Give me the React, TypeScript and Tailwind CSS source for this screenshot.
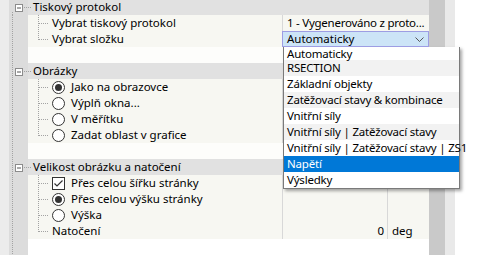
import type { ReactNode } from 'react'

type Control = 'radio' | 'radioOn' | 'check'

type Row =
  | { kind: 'header'; label: string; first?: boolean }
  | { kind: 'child'; label: string; control?: Control; last?: boolean; value?: ReactNode; unit?: boolean; unitText?: string }
  | { kind: 'blank' }

const rows: Row[] = [
  { kind: 'header', label: 'Tiskový protokol', first: true },
  { kind: 'child', label: 'Vybrat tiskový protokol', value: '1 - Vygenerováno z proto...' },
  { kind: 'child', label: 'Vybrat složku', last: true, value: 'select' },
  { kind: 'blank' },
  { kind: 'header', label: 'Obrázky' },
  { kind: 'child', label: 'Jako na obrazovce', control: 'radioOn' },
  { kind: 'child', label: 'Výplň okna...', control: 'radio' },
  { kind: 'child', label: 'V měřítku', control: 'radio' },
  { kind: 'child', label: 'Zadat oblast v grafice', control: 'radio', last: true },
  { kind: 'blank' },
  { kind: 'header', label: 'Velikost obrázku a natočení' },
  { kind: 'child', label: 'Přes celou šířku stránky', control: 'check', unit: true },
  { kind: 'child', label: 'Přes celou výšku stránky', control: 'radioOn', unit: true },
  { kind: 'child', label: 'Výška', control: 'radio', unit: true },
  { kind: 'child', label: 'Natočení', last: true, unit: true, value: '0', unitText: 'deg' },
]

const options = [
  'Automaticky',
  'RSECTION',
  'Základní objekty',
  'Zatěžovací stavy & kombinace',
  'Vnitřní síly',
  'Vnitřní síly | Zatěžovací stavy',
  'Vnitřní síly | Zatěžovací stavy | ZS1',
  'Napětí',
  'Výsledky',
]

const DOT = '#a3a3a3'

function Gutter({ header, first }: { header?: boolean; first?: boolean }) {
  return (
    <div className="flex h-4 shrink-0">
      <div className="w-[9px] bg-[#ececec]" />
      <svg width="19" height="16" className="block bg-[#dcdcdc]">
        <line x1="3.5" y1={first ? 13 : 0} x2="3.5" y2="16" stroke={DOT} strokeDasharray="1 1" />
        {header && (
          <>
            <rect x="6.5" y="5.5" width="7" height="7" fill="#ffffff" stroke="#8c8c8c" />
            <line x1="8" y1="9" x2="12" y2="9" stroke="#555555" />
            <line x1="15" y1="8.5" x2="19" y2="8.5" stroke={DOT} strokeDasharray="1 1" />
          </>
        )}
      </svg>
    </div>
  )
}

function ControlIcon({ type }: { type: Control }) {
  if (type === 'check') {
    return (
      <svg width="13" height="13" className="block shrink-0">
        <rect x="0.5" y="0.5" width="12" height="12" fill="#ffffff" stroke="#333333" />
        <path d="M2.5 6.5 L5 9 L10.5 3.5" fill="none" stroke="#333333" strokeWidth="1.2" />
      </svg>
    )
  }
  return (
    <svg width="13" height="13" className="block shrink-0">
      <circle cx="6.5" cy="6.5" r="6" fill="#ffffff" stroke="#333333" />
      {type === 'radioOn' && <circle cx="6.5" cy="6.5" r="3.5" fill="#333333" />}
    </svg>
  )
}

function SelectCell() {
  return (
    <div className="relative z-20 flex h-4 w-[147px] items-center justify-between border border-[#9d9de3] bg-[#cce4f7] pl-1 pr-[4px]">
      <span>Automaticky</span>
      <svg width="9" height="5" className="block">
        <path d="M0.5 0.5 L4.5 4.5 L8.5 0.5" fill="none" stroke="#555555" />
      </svg>
    </div>
  )
}

function ValueCell({ row }: { row: Extract<Row, { kind: 'child' }> }) {
  if (row.value === 'select') return <SelectCell />
  if (row.unit) {
    return (
      <div className="flex h-4 w-[147px] border-l border-[#d8d8d8]">
        <div className="flex w-[104px] items-center justify-end pr-[3px]">{row.value}</div>
        <div className="flex flex-1 items-center border-l border-[#d8d8d8] pl-1">{row.unitText}</div>
      </div>
    )
  }
  return (
    <div className="flex h-4 w-[147px] items-center overflow-hidden whitespace-nowrap border-l border-[#d8d8d8] pl-1 tracking-[-0.25px]">
      {row.value}
    </div>
  )
}

function TreeRow({ row }: { row: Row }) {
  if (row.kind === 'blank') {
    return (
      <div className="flex h-4 bg-[#fdfdfb]">
        <Gutter />
      </div>
    )
  }
  if (row.kind === 'header') {
    return (
      <div className="flex h-4 items-center bg-[#e1e1e1]">
        <Gutter header first={row.first} />
        <svg width="5" height="16" className="block shrink-0">
          <line x1="0" y1="8.5" x2="4" y2="8.5" stroke={DOT} strokeDasharray="1 1" />
        </svg>
        <span className="whitespace-nowrap">{row.label}</span>
      </div>
    )
  }
  return (
    <div className="flex h-4 bg-[#f7f7f2]">
      <Gutter />
      <svg width="24" height="16" className="block shrink-0">
        <line x1="10.5" y1="0" x2="10.5" y2={row.last ? 9 : 16} stroke={DOT} strokeDasharray="1 1" />
        <line x1="11" y1="8.5" x2="21" y2="8.5" stroke={DOT} strokeDasharray="1 1" />
      </svg>
      <div className="flex flex-1 items-center gap-[6px] whitespace-nowrap">
        {row.control && <ControlIcon type={row.control} />}
        <span>{row.label}</span>
      </div>
      <ValueCell row={row} />
    </div>
  )
}

export default function App() {
  return (
    <div className="relative flex h-[255px] w-[480px] overflow-hidden bg-white font-['Segoe_UI','Noto_Sans',sans-serif] text-[11.5px] leading-4 text-black">
      <div className="mt-[-1px] flex w-[429px] flex-col">
        {rows.map((row, i) => (
          <TreeRow key={i} row={row} />
        ))}
        <div className="flex flex-1">
          <div className="flex flex-col">
            <Gutter />
            <Gutter />
          </div>
        </div>
      </div>
      <div className="w-4 bg-[#c9c9c9]" />
      <div className="w-[10px] bg-[#e9e9e9]" />

      {/* open dropdown of "Vybrat složku" */}
      <div className="absolute left-[283px] top-[47px] z-10 w-[177px] border border-t-0 border-[#7a7a7a] bg-white tracking-[-0.2px] shadow-[2px_2px_3px_rgba(0,0,0,0.35)]">
        {options.map((opt, i) => (
          <div
            key={opt}
            className={`flex items-center whitespace-nowrap pl-[3px] ${i === 0 ? 'h-[13px] leading-[13px]' : 'h-4'} ${
              opt === 'Napětí' ? 'bg-[#0078d7] text-white' : i % 2 === 1 ? 'bg-[#f2f2f2]' : 'bg-white'
            }`}
          >
            {opt}
          </div>
        ))}
      </div>
    </div>
  )
}
